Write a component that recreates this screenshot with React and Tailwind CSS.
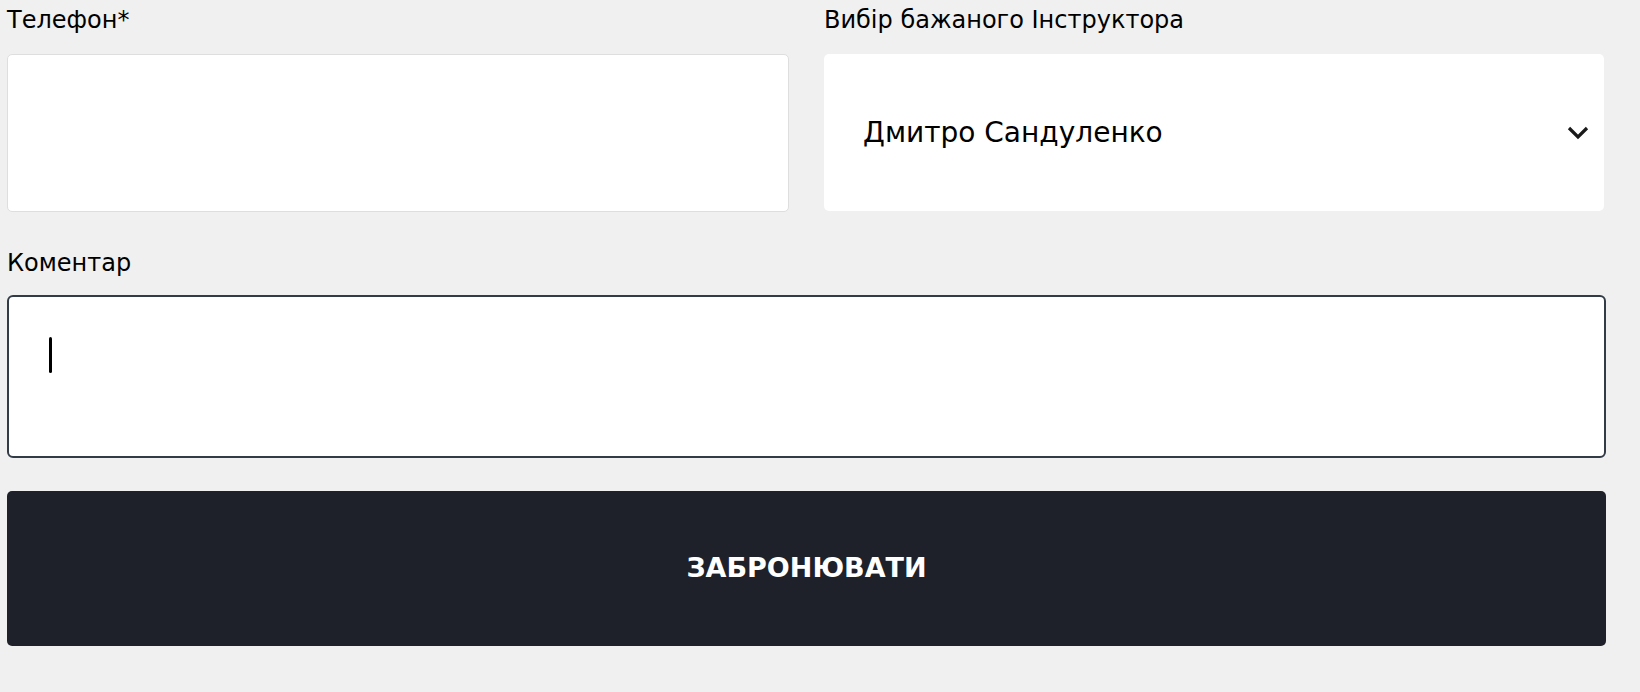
import React from 'react';

function Label({ children }) {
  return <label className="block text-[24px] leading-[40px] text-black">{children}</label>;
}

export default function App() {
  return (
    <div className="min-h-[692px] w-full bg-[#f0f0f0] font-['DejaVu_Sans',sans-serif]">
      <form className="ml-[7px] flex w-[1599px] flex-col">
        <div className="grid grid-cols-2 gap-x-[35px]">
          <div className="flex flex-col gap-[14px]">
            <Label>Телефон*</Label>
            <input
              type="tel"
              className="h-[158px] w-full rounded-[5px] border border-[#dedede] bg-white px-[40px] text-[28px] outline-none"
            />
          </div>
          <div className="flex flex-col gap-[14px]">
            <Label>Вибір бажаного Інструктора</Label>
            <div className="flex h-[157px] w-[780px] items-center justify-between rounded-[5px] bg-white pl-[39px] pr-[15px]">
              <span className="text-[28px] text-black">Дмитро Сандуленко</span>
              <svg width="22" height="14" viewBox="0 0 22 14" fill="none">
                <path d="M2 2l9 9 9-9" stroke="#1a1a1a" strokeWidth="3.2" />
              </svg>
            </div>
          </div>
        </div>

        <div className="mt-[31px] flex flex-col gap-[12px]">
          <Label>Коментар</Label>
          <div className="h-[163px] w-full rounded-[6px] border-2 border-[#333b47] bg-white pl-[40px] pt-[40px]">
            <span className="block h-[36px] w-[3px] rounded-full bg-black" />
          </div>
        </div>

        <button
          type="button"
          className="mt-[33px] flex h-[155px] w-full items-center justify-center rounded-[5px] bg-[#1e2129] text-[27px] font-bold uppercase text-white"
        >
          Забронювати
        </button>
      </form>
    </div>
  );
}
